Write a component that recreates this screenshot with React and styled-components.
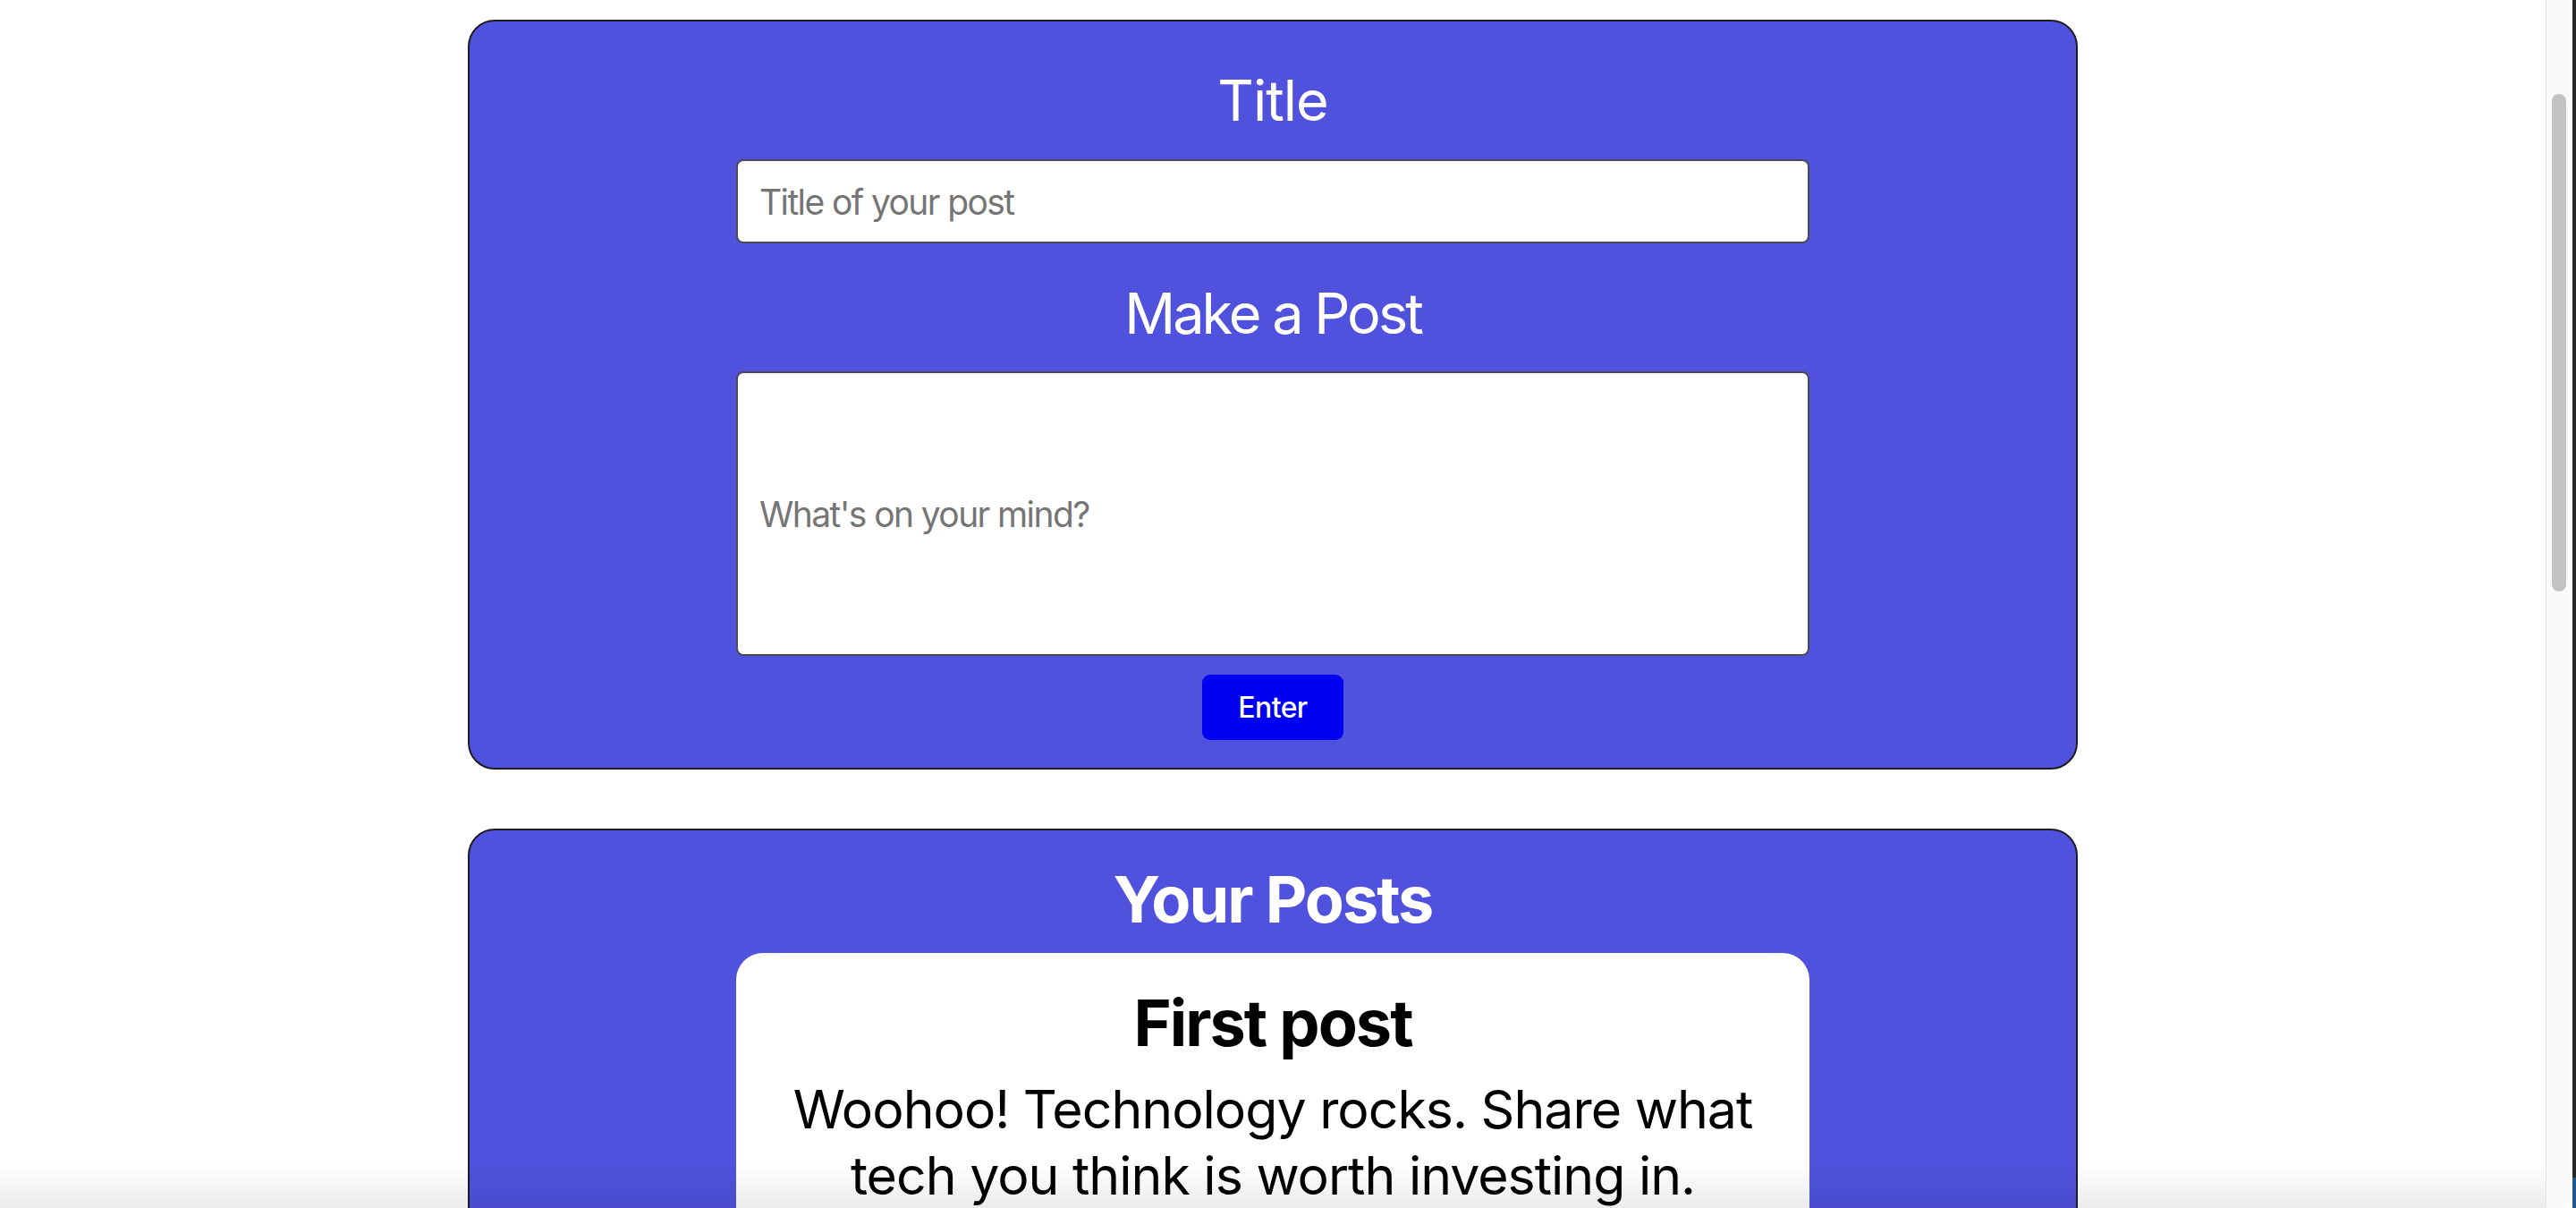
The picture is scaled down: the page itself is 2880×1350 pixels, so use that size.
import React from "react";
import styled, { createGlobalStyle } from "styled-components";

const Global = createGlobalStyle`
  html, body { margin: 0; padding: 0; overflow: hidden; background: #ffffff; }
  body { font-family: Inter, "Noto Sans", "Liberation Sans", sans-serif; }
  * { box-sizing: border-box; }
`;

const Shell = styled.div`
  display: flex;
  height: 100vh;
  width: 100vw;
  position: relative;
`;

const Page = styled.main`
  flex: 1;
  overflow: hidden;
  display: flex;
  flex-direction: column;
  align-items: center;
  padding-top: 22px;
  gap: 66px;
`;

const Panel = styled.section`
  width: 1800px;
  flex-shrink: 0;
  background: rgb(80, 82, 222);
  border: 2px solid #1c1c22;
  border-radius: 30px;
  display: flex;
  flex-direction: column;
  align-items: center;
  padding: ${(p) => p.$pad};
`;

const Heading = styled.h2`
  margin: ${(p) => p.$m || "0"};
  color: ${(p) => (p.$dark ? "#000" : "#fff")};
  font-size: ${(p) => p.$size}px;
  font-weight: ${(p) => (p.$bold ? 700 : 400)};
  letter-spacing: ${(p) => p.$ls || "-1px"};
  line-height: ${(p) => p.$lh}px;
  text-align: center;
`;

const Field = styled.input`
  width: 1200px;
  height: ${(p) => p.$h}px;
  margin-top: ${(p) => p.$mt}px;
  border: 2px solid #4a4a55;
  border-radius: 8px;
  background: #fff;
  padding: 0 24px;
  font-family: Inter, "Noto Sans", sans-serif;
  font-size: 39px;
  letter-spacing: -1.6px;
  color: #222;
  outline: none;
  &::placeholder { color: #757575; }
`;

const Button = styled.button`
  margin-top: 21px;
  width: 158px;
  height: 73px;
  border: none;
  border-radius: 9px;
  background: #0000f0;
  color: #fff;
  font-family: Inter, "Noto Sans", sans-serif;
  font-size: 32px;
  font-weight: 500;
  letter-spacing: -0.6px;
  cursor: pointer;
`;

const PostCard = styled.article`
  width: 1200px;
  margin-top: 17px;
  background: #fff;
  border-radius: 30px;
  padding: 34px 50px 60px;
  display: flex;
  flex-direction: column;
  align-items: center;
`;

const PostBody = styled.p`
  margin: 17px 0 0;
  font-size: 59px;
  line-height: 74px;
  letter-spacing: -1px;
  color: #000;
  text-align: center;
`;

const ScrollTrack = styled.div`
  width: 34px;
  flex-shrink: 0;
  display: flex;
  height: 100%;
`;

const TrackBody = styled.div`
  width: 30px;
  height: 100%;
  background: #fafafa;
  border-left: 1px solid #e6e6e6;
  border-bottom-right-radius: 10px;
  padding: 105px 0 0 6px;
`;

const Thumb = styled.div`
  width: 16px;
  height: 556px;
  background: #c2c2c2;
  border-radius: 8px;
`;

const WindowEdge = styled.div`
  width: 4px;
  height: 100%;
  background: linear-gradient(to bottom, #262626 0%, #262626 97.5%, #1f5a8a 97.5%, #1f5a8a 100%);
`;

const BottomShade = styled.div`
  position: absolute;
  left: 0;
  right: 34px;
  bottom: 0;
  height: 50px;
  pointer-events: none;
  background: linear-gradient(to bottom, rgba(0, 0, 0, 0), rgba(0, 0, 0, 0.08));
`;

export default function App() {
  return (
    <Shell>
      <Global />
      <Page>
        <Panel $pad="50px 0 31px">
          <Heading $size={63} $lh={76}>Title</Heading>
          <Field $h={94} $mt={28} placeholder="Title of your post" />
          <Heading $size={63} $lh={76} $m="40px 0 0" $ls="-3px">Make a Post</Heading>
          <Field $h={318} $mt={27} placeholder="What's on your mind?" />
          <Button>Enter</Button>
        </Panel>
        <Panel $pad="33px 0 40px">
          <Heading $size={72} $lh={87} $bold $ls="-2px">Your Posts</Heading>
          <PostCard>
            <Heading as="h3" $size={72} $lh={87} $bold $dark $ls="-2px">First post</Heading>
            <PostBody>Woohoo! Technology rocks. Share what tech you think is worth investing in.</PostBody>
          </PostCard>
        </Panel>
      </Page>
      <ScrollTrack>
        <TrackBody><Thumb /></TrackBody>
        <WindowEdge />
      </ScrollTrack>
      <BottomShade />
    </Shell>
  );
}
